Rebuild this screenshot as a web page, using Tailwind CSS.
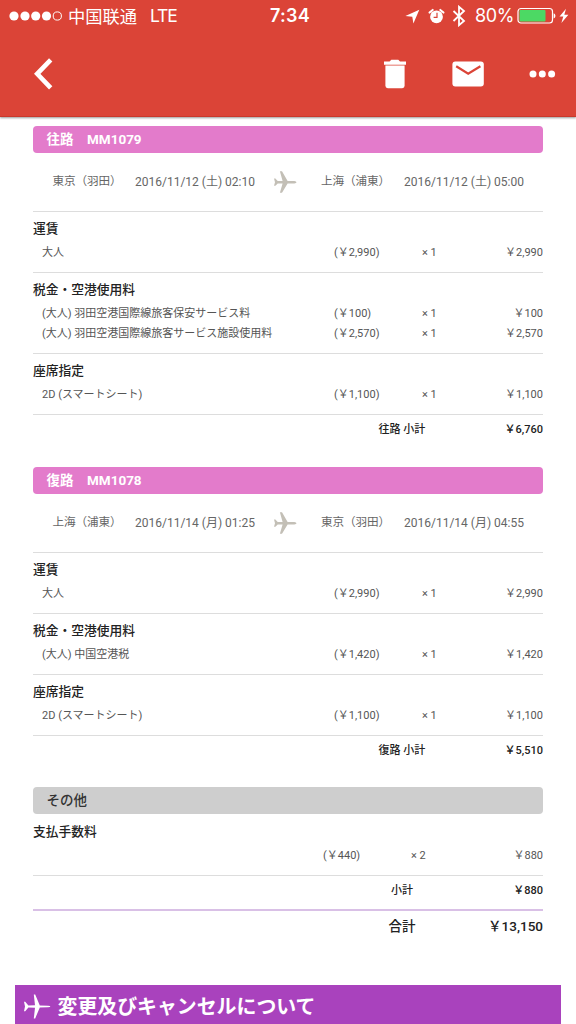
<!DOCTYPE html>
<html lang="ja">
<head>
    <meta charset="UTF-8">
    <meta name="viewport" content="width=device-width, initial-scale=1.0">
    <title>MM1079 / MM1078</title>
    <script src="https://cdn.jsdelivr.net/npm/@tailwindcss/browser@4"></script>
</head>
<body class="bg-white font-['Roboto','Noto_Sans_CJK_JP',sans-serif] text-[#555] overflow-hidden">
<div class="w-[576px] h-[1024px] overflow-hidden flex flex-col">

    <!-- Header -->
    <header class="h-[117px] shrink-0 bg-[#db4437] border-b border-[#c9382b] shadow-[0_1px_2px_rgba(0,0,0,0.4)] text-white">
        <div class="h-8 flex items-center pl-[9px] pr-[6px]">
            <svg class="w-[54px] h-3" viewBox="0 0 54 12" fill="#fff">
                <circle cx="5" cy="6" r="4.6"/><circle cx="16" cy="6" r="4.6"/><circle cx="26.7" cy="6" r="4.6"/><circle cx="37.5" cy="6" r="4.6"/>
                <circle cx="48.3" cy="6" r="4.1" fill="none" stroke="#fff"/>
            </svg>
            <span class="ml-[5px] w-[82px] text-[17.3px] leading-8 font-['Noto_Sans_CJK_SC',sans-serif] font-normal whitespace-nowrap">中国联通</span>
            <span class="w-[120px] text-[17.5px] leading-8 font-['Inter',sans-serif] font-normal tracking-[-1.1px]">LTE</span>
            <span class="w-[135px] text-[18px] leading-8 font-['Inter',sans-serif] font-semibold tracking-[0.3px]">7:34</span>
            <svg class="w-[15px] h-[15px]" viewBox="0 0 15 15" fill="#fff"><path d="M14.3.7 8.4 14.4 7.3 7.8.4 6.9z"/></svg>
            <svg class="w-[17px] h-[17px] ml-[8px]" viewBox="0 0 17 17">
                <circle cx="8.5" cy="8.8" r="6.4" fill="#fff"/>
                <path d="M1.5 4.6 4.7 1.9M15.5 4.6 12.3 1.9" stroke="#fff" stroke-width="2" stroke-linecap="round"/>
                <path d="M9 4.7V9.3H5.6" fill="none" stroke="#db4437" stroke-width="1.2"/>
            </svg>
            <svg class="w-[14px] h-[22px] ml-[7px]" viewBox="0 0 14 22" fill="none" stroke="#fff" stroke-width="1.8"><path d="M1.5 6 12 16 7 20.2V1.8L12 6 1.5 16"/></svg>
            <span class="ml-[9px] w-[41px] text-[18px] leading-8 font-['Inter',sans-serif] font-normal tracking-[-0.4px] whitespace-nowrap">80%</span>
            <svg class="w-[39px] h-[18px] ml-px" viewBox="0 0 39 18">
                <rect x="1" y="1.5" width="34.5" height="14.5" rx="3" fill="none" stroke="#fff" stroke-width="1.2"/>
                <rect x="2.5" y="3" width="26" height="11.5" rx="1" fill="#4cd964"/>
                <path d="M36.6 6.2c2.4.8 2.4 4.4 0 5.2z" fill="#fff"/>
            </svg>
            <svg class="w-[10px] h-4 ml-[3px]" viewBox="0 0 10 16" fill="#fff"><path d="M7 .8.5 8.6H4.3L2.4 15 9.4 6.8H5.3z"/></svg>
        </div>
        <div class="h-[84px] flex items-center pl-[33px] pr-[20px]">
            <svg class="w-[20px] h-[32px]" viewBox="0 0 20 32" fill="none" stroke="#fff" stroke-width="4.6"><path d="M17.7 1.8 4.2 15.8 17.7 29.8"/></svg>
            <svg class="w-[24px] h-[30px] ml-[330px]" viewBox="0 0 24 30" fill="#fff">
                <path d="M1 2.5H6.6L8.3.8H15.3L17 2.5H23V5.8H1z"/><path d="M2.4 6.6H21.6V26.8a2.4 2.4 0 0 1-2.4 2.4H4.8a2.4 2.4 0 0 1-2.4-2.4z"/>
            </svg>
            <svg class="w-[32px] h-[26px] ml-[45px]" viewBox="0 0 32 26">
                <rect x=".4" y=".5" width="31.4" height="25" rx="3" fill="#fff"/>
                <path d="M4.2 5.2 16.2 12.8 28.4 5.2" fill="none" stroke="#db4437" stroke-width="2.2"/>
            </svg>
            <svg class="w-[27px] h-[8px] ml-[44.5px]" viewBox="0 0 27 8" fill="#fff"><circle cx="4" cy="4" r="3.5"/><circle cx="13.3" cy="4" r="3.5"/><circle cx="22.6" cy="4" r="3.5"/></svg>
        </div>
    </header>

    <main class="mt-[9px] ml-[33px] w-[510px] text-[11px] leading-5 whitespace-nowrap">

        <!-- Outbound -->
        <h2 class="h-[27px] rounded-[4px] bg-[#e37bcb] pl-[13.5px] text-[13.5px] leading-[27px] font-bold text-white">往路　MM1079</h2>
        <div class="h-[59px] flex items-center border-b border-[#ddd] pl-[19.5px] text-xs text-[#666]">
            <span class="w-[82.5px] text-[11.6px] tracking-[-0.1px]">東京（羽田）</span>
            <span class="w-[138px]">2016/11/12 (土) 02:10</span>
            <svg class="w-[24px] h-[22px]" viewBox="0 0 24 22" fill="#c3bfb6"><path d="M1 7.6H2.4L4.7 10H9.6L6.9.3H9L14.6 10H21.3Q23.5 10.2 23.5 11.2T21.3 12.4H14.6L9 21.8H6.9L9.6 12.4H4.7L2.4 14.7H1L2 11.2z"/></svg>
            <span class="ml-[24px] w-[83px] text-[11.6px] tracking-[-0.1px]">上海（浦東）</span>
            <span>2016/11/12 (土) 05:00</span>
        </div>
        <section class="border-b border-[#ddd] pt-[7px] pb-[9px]">
            <h3 class="mb-1 text-[12.75px] leading-5 font-medium text-[#222]">運賃</h3>
            <div class="grid grid-cols-[292px_88px_1fr] pl-[9px]"><span>大人</span><span>(￥2,990)</span><span class="flex justify-between"><span>× 1</span><span>￥2,990</span></span></div>
        </section>
        <section class="border-b border-[#ddd] pt-[7px] pb-[9px]">
            <h3 class="mb-1 text-[12.75px] leading-5 font-medium text-[#222]">税金・空港使用料</h3>
            <div class="grid grid-cols-[292px_88px_1fr] pl-[9px]"><span>(大人) 羽田空港国際線旅客保安サービス料</span><span>(￥100)</span><span class="flex justify-between"><span>× 1</span><span>￥100</span></span></div>
            <div class="grid grid-cols-[292px_88px_1fr] pl-[9px]"><span>(大人) 羽田空港国際線旅客サービス施設使用料</span><span>(￥2,570)</span><span class="flex justify-between"><span>× 1</span><span>￥2,570</span></span></div>
        </section>
        <section class="border-b border-[#ddd] pt-[7px] pb-[9px]">
            <h3 class="mb-1 text-[12.75px] leading-5 font-medium text-[#222]">座席指定</h3>
            <div class="grid grid-cols-[292px_88px_1fr] pl-[9px]"><span>2D (スマートシート)</span><span>(￥1,100)</span><span class="flex justify-between"><span>× 1</span><span>￥1,100</span></span></div>
        </section>
        <div class="h-[29px] flex justify-between pl-[345.5px] leading-[30px] font-medium text-[#222]"><span>往路 小計</span><span>￥6,760</span></div>

        <!-- Return -->
        <h2 class="mt-[23px] h-[27px] rounded-[4px] bg-[#e37bcb] pl-[13.5px] text-[13.5px] leading-[27px] font-bold text-white">復路　MM1078</h2>
        <div class="h-[59px] flex items-center border-b border-[#ddd] pl-[19.5px] text-xs text-[#666]">
            <span class="w-[82.5px] text-[11.6px] tracking-[-0.1px]">上海（浦東）</span>
            <span class="w-[138px]">2016/11/14 (月) 01:25</span>
            <svg class="w-[24px] h-[22px]" viewBox="0 0 24 22" fill="#c3bfb6"><path d="M1 7.6H2.4L4.7 10H9.6L6.9.3H9L14.6 10H21.3Q23.5 10.2 23.5 11.2T21.3 12.4H14.6L9 21.8H6.9L9.6 12.4H4.7L2.4 14.7H1L2 11.2z"/></svg>
            <span class="ml-[24px] w-[83px] text-[11.6px] tracking-[-0.1px]">東京（羽田）</span>
            <span>2016/11/14 (月) 04:55</span>
        </div>
        <section class="border-b border-[#ddd] pt-[7px] pb-[9px]">
            <h3 class="mb-1 text-[12.75px] leading-5 font-medium text-[#222]">運賃</h3>
            <div class="grid grid-cols-[292px_88px_1fr] pl-[9px]"><span>大人</span><span>(￥2,990)</span><span class="flex justify-between"><span>× 1</span><span>￥2,990</span></span></div>
        </section>
        <section class="border-b border-[#ddd] pt-[7px] pb-[9px]">
            <h3 class="mb-1 text-[12.75px] leading-5 font-medium text-[#222]">税金・空港使用料</h3>
            <div class="grid grid-cols-[292px_88px_1fr] pl-[9px]"><span>(大人) 中国空港税</span><span>(￥1,420)</span><span class="flex justify-between"><span>× 1</span><span>￥1,420</span></span></div>
        </section>
        <section class="border-b border-[#ddd] pt-[7px] pb-[9px]">
            <h3 class="mb-1 text-[12.75px] leading-5 font-medium text-[#222]">座席指定</h3>
            <div class="grid grid-cols-[292px_88px_1fr] pl-[9px]"><span>2D (スマートシート)</span><span>(￥1,100)</span><span class="flex justify-between"><span>× 1</span><span>￥1,100</span></span></div>
        </section>
        <div class="h-[29px] flex justify-between pl-[345.5px] leading-[30px] font-medium text-[#222]"><span>復路 小計</span><span>￥5,510</span></div>

        <!-- Other fees -->
        <h2 class="mt-[22px] h-[27px] rounded-[4px] bg-[#cecece] pl-[13.5px] text-[13.5px] leading-[26px] font-medium text-[#333]">その他</h2>
        <section class="border-b border-[#ddd] pt-[8px] pb-[9px]">
            <h3 class="mb-[4px] text-[12.75px] leading-5 font-medium text-[#222]">支払手数料</h3>
            <div class="grid grid-cols-[88px_1fr] pl-[290px]"><span>(￥440)</span><span class="flex justify-between"><span>× 2</span><span>￥880</span></span></div>
        </section>
        <div class="h-[33px] flex justify-between pl-[358px] leading-[30px] font-medium text-[#222]"><span>小計</span><span>￥880</span></div>
        <div class="border-t-2 border-[#d9c0e6] flex justify-between pl-[355.5px] text-[13.5px] leading-[31px] font-medium text-[#222]"><span>合計</span><span>￥13,150</span></div>
    </main>

    <!-- Change / cancel banner -->
    <div class="mt-auto ml-[15px] w-[546px] h-[39px] shrink-0 bg-[#a942bd] flex items-start pl-[8px] text-white">
        <svg class="mt-[9px] w-[28px] h-[25px]" viewBox="0 0 28 25" fill="#fff"><path d="M1 7.8H2.2L5.4 11.6 12 11.2 10.8.6H12.2L16.8 11.4 25 11.7Q27.4 11.9 27.4 12.5T25 13.3L16.8 13.6 12.2 24.4H10.8L12 13.8 5.4 13.4 2.2 17.2H1L2 12.5z"/></svg>
        <span class="ml-[6.5px] text-[19.9px] leading-[46px] font-bold whitespace-nowrap">変更及びキャンセルについて</span>
    </div>
</div>
</body>
</html>
